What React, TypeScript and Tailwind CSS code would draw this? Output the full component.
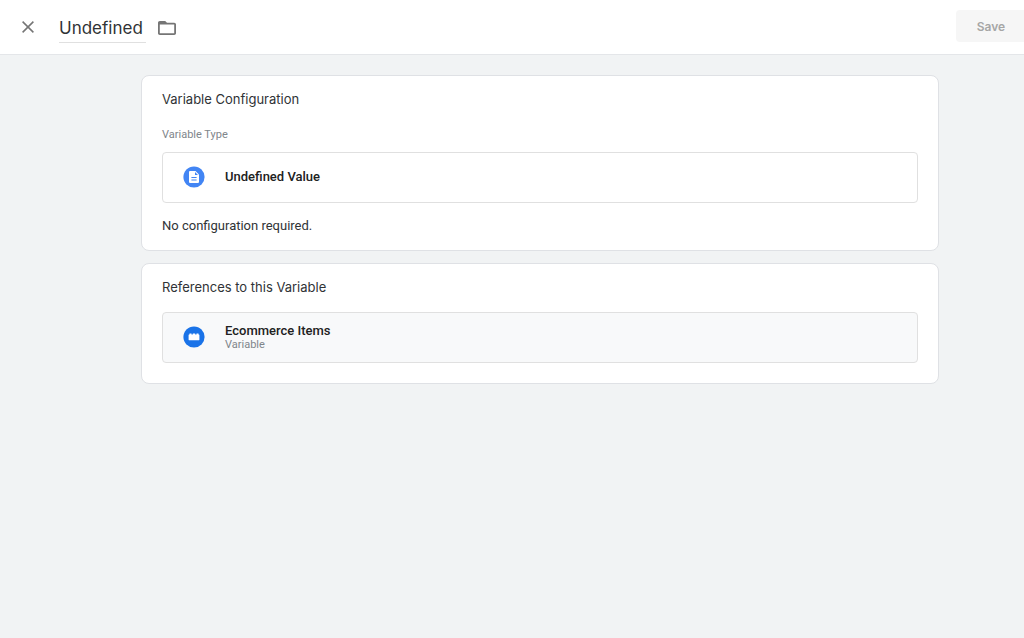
import React, { useState } from 'react';

const CARD = 'rounded-lg border border-[#dfe1e5] bg-white px-5 pt-[13px]';
const ROW = 'flex w-full items-center rounded border border-[#e0e0e0] pl-5 pb-px h-[51px] text-left';
const HEADING = "font-['Inter',sans-serif] text-[13px] leading-5 text-[#303336]";

function CloseIcon() {
  return (
    <svg viewBox="0 0 12 12" className="h-3 w-3" fill="none" stroke="#757575" strokeWidth="1.5" aria-hidden="true">
      <path d="M0.6 0.6 11.4 11.4M11.4 0.6 0.6 11.4" />
    </svg>
  );
}

function FolderIcon() {
  return (
    <svg viewBox="2 4 20 16" className="h-[14px] w-[18px]" preserveAspectRatio="none" fill="#757575" aria-hidden="true">
      <path d="M20 6h-8l-2-2H4c-1.1 0-1.99.9-1.99 2L2 18c0 1.1.9 2 2 2h16c1.1 0 2-.9 2-2V8c0-1.1-.9-2-2-2zm0 12H4V8h16v10z" />
    </svg>
  );
}

function DocumentIcon() {
  return (
    <svg viewBox="0 0 22 22" className="h-[22px] w-[22px] shrink-0" aria-hidden="true">
      <circle cx="11" cy="11" r="10.6" fill="#4285f4" />
      <path d="M7 5h5.5L16 8.5v7.6a.8.8 0 0 1-.8.8H6.8a.8.8 0 0 1-.8-.8V6a1 1 0 0 1 1-1z" fill="#fff" />
      <path d="M12 6v3h3zM8.4 11h5.2v1.1H8.4zM8.4 13.4h5.2v1.1H8.4z" fill="#4285f4" />
    </svg>
  );
}

function BrickIcon() {
  return (
    <svg viewBox="0 0 22 22" className="h-[22px] w-[22px] shrink-0" aria-hidden="true">
      <circle cx="11" cy="11" r="10.6" fill="#1a73e8" />
      <path
        d="M6 8.6h.5V7.6h2v1h1.3v-1h2.4v1h1.3v-1h2v1h.5a.4.4 0 0 1 .4.4v4.800a.4.4 0 0 1-.4.4H6a.4.4 0 0 1-.4-.4V9a.4.4 0 0 1 .4-.4z"
        fill="#fff"
      />
    </svg>
  );
}

export default function App() {
  const [name, setName] = useState('Undefined');

  return (
    <div className="min-h-screen bg-[#f1f3f4] font-['Roboto',sans-serif]">
      <header className="flex h-[55px] items-center border-b border-[#e4e6e9] bg-white pl-[22px]">
        <button type="button" aria-label="Close" className="mr-[25px]">
          <CloseIcon />
        </button>
        <input
          aria-label="Variable name"
          value={name}
          onChange={(e) => setName(e.target.value)}
          className="h-8 w-[87px] border-b border-[#e0e0e0] pt-0.5 font-['Inter',sans-serif] text-[17px] text-[#303336] outline-none"
        />
        <button type="button" aria-label="Move to folder" className="ml-3 pt-0.5">
          <FolderIcon />
        </button>
        <button
          type="button"
          disabled
          className="ml-auto mb-[2px] h-8 w-[68px] rounded-l bg-[#f6f6f6] pl-0.5 pt-0.5 font-['Inter',sans-serif] text-[12px] font-semibold text-[#a6a6a6]"
        >
          Save
        </button>
      </header>

      <main className="ml-[141px] mr-[85px] space-y-3 pt-5">
        <section className={`${CARD} pb-[14px]`}>
          <h2 className={HEADING}>Variable Configuration</h2>
          <p className="mt-[18px] text-[11px] leading-4 text-[#80868b]">Variable Type</p>
          <button type="button" className={`${ROW} mt-[9px] bg-white`}>
            <DocumentIcon />
            <span className="ml-5 text-[13px] font-medium leading-4 text-[#212121]">Undefined Value</span>
          </button>
          <p className="mt-[13px] text-[13px] leading-5 text-[#303336]">No configuration required.</p>
        </section>

        <section className={`${CARD} pb-5`}>
          <h2 className={HEADING}>References to this Variable</h2>
          <a href="#ecommerce-items" className={`${ROW} mt-[15px] bg-[#f8f9fa]`}>
            <BrickIcon />
            <span className="ml-5 block">
              <span className="block text-[13px] font-medium leading-4 text-[#212121]">Ecommerce Items</span>
              <span className="block text-[11px] leading-3 text-[#80868b]">Variable</span>
            </span>
          </a>
        </section>
      </main>
    </div>
  );
}
